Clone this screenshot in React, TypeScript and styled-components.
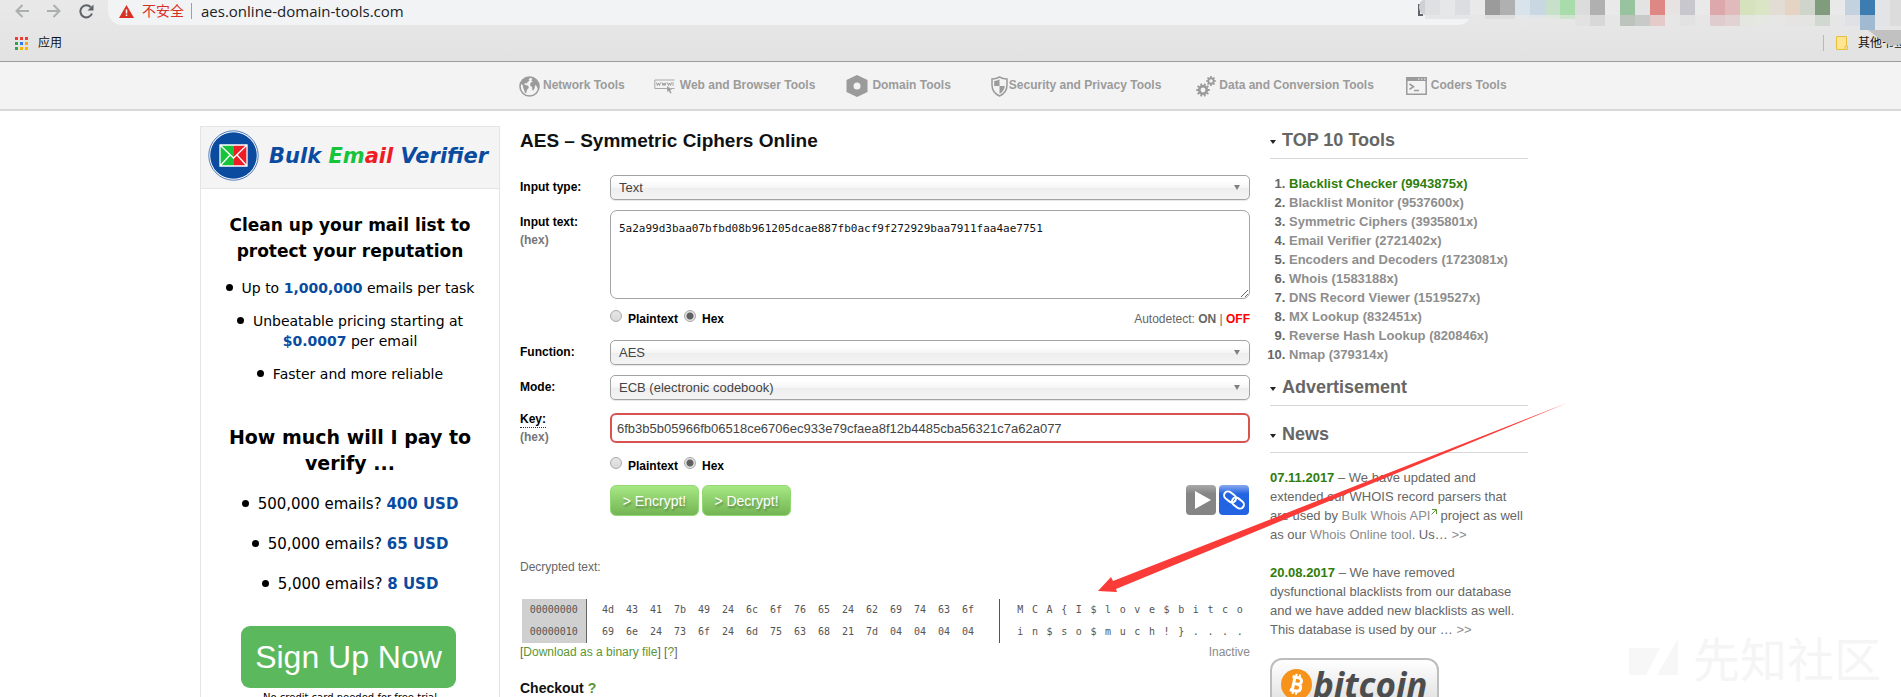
import React from "react";
import styled, { createGlobalStyle } from "styled-components";

const sans = '"Liberation Sans", Arial, sans-serif';
const mono = '"DejaVu Sans Mono", "Liberation Mono", monospace';
const ui = '"Open Sans", "Noto Sans CJK SC", sans-serif';

const GlobalStyle = createGlobalStyle`
  *, *::before, *::after { box-sizing: border-box; }
  body { margin: 0; background: #fff; color: #666; font: 12px/18px ${sans}; }
  h1, h2, h3, p, ul, ol, fieldset { margin: 0; padding: 0; border: 0; }
  a { text-decoration: none; color: inherit; }
  svg { display: block; flex: none; }
`;

const Window = styled.div`
  position: relative;
  height: 100vh;
  overflow: hidden;
`;

/* ---------- browser chrome ---------- */

const Chrome = styled.header`
  position: relative;
  height: 62px;
  background: linear-gradient(#e9e9e9, #e2e2e2);
  border-bottom: 1px solid #9c9c9c;
  font-family: ${ui};
`;

const AddressRow = styled.div`
  display: flex;
  align-items: center;
  height: 25px;
  padding: 0 429px 0 15px;
`;

const ToolButton = styled.button`
  display: flex;
  padding: 0;
  margin: 0 18px 3px 0;
  border: 0;
  background: none;
  color: ${(p: { $dim?: boolean }) => (p.$dim ? "#acaeb0" : "#5f6368")};
`;

const AddressBar = styled.div`
  flex: 1;
  display: flex;
  align-items: center;
  height: 25px;
  margin-left: -4px;
  padding: 0 0 3px 11px;
  background: #f1f3f5;
  border-radius: 0 0 14px 14px;
  color: #202124;
  font-size: 15px;
`;

const Insecure = styled.span`
  margin-left: 8px;
  padding-right: 7px;
  border-right: 1px solid #9aa0a6;
  color: #d93025;
  font-size: 14px;
  line-height: 16px;
`;

const Url = styled.span`
  margin-left: 9px;
`;

const BookmarkRow = styled.div`
  display: flex;
  align-items: center;
  justify-content: space-between;
  height: 36px;
  padding-left: 15px;
`;

const Bookmark = styled.a`
  display: flex;
  align-items: center;
  gap: 10px;
  color: #111;
  font-size: 12px;
  white-space: nowrap;
`;

const OtherBookmarks = styled(Bookmark)`
  height: 16px;
  width: 78px;
  padding-left: 12px;
  border-left: 1px solid #b9b9b9;
  overflow: hidden;
`;

const Mosaic = styled.svg`
  position: absolute;
  top: 0;
  right: 0;
`;

/* ---------- site navigation ---------- */

const Nav = styled.nav`
  display: flex;
  align-items: center;
  height: 49px;
  padding: 0 0 1px 519px;
  background: #f3f3f3;
  border-bottom: 2px solid #d8d8d8;
`;

const NavLink = styled.a<{ $lead: number; $gap: number }>`
  display: flex;
  align-items: center;
  gap: ${(p) => p.$gap}px;
  margin-left: ${(p) => p.$lead}px;
  color: #9b9b9b;
  font-weight: bold;
  white-space: nowrap;
  svg { margin-top: 2px; }
`;

/* ---------- page columns ---------- */

const Columns = styled.div`
  display: grid;
  grid-template-columns: 300px minmax(0, 1fr) 258px;
  gap: 20px;
  align-items: start;
  padding: 15px 373px 0 200px;
`;

const Banner = styled.aside`
  border: 1px solid #e4e4e4;
  color: #000;
  font-family: "DejaVu Sans", Verdana, sans-serif;
  text-align: center;
`;

const BannerHead = styled.div`
  display: flex;
  align-items: center;
  gap: 10px;
  height: 62px;
  padding: 0 0 4px 7px;
  background: #f4f4f4;
  border-bottom: 1px solid #e4e4e4;
`;

const Brand = styled.strong`
  color: #0a4ba0;
  font-size: 21px;
  font-style: italic;
  white-space: nowrap;
`;

const Tint = styled.span<{ $color: string }>`
  color: ${(p) => p.$color};
`;

const BannerTitle = styled.h2<{ $size: number; $top: number }>`
  margin-top: ${(p) => p.$top}px;
  font-size: ${(p) => p.$size}px;
  line-height: 26px;
`;

const Points = styled.ul<{ $gap: number; $top: number; $size: number }>`
  display: flex;
  flex-direction: column;
  gap: ${(p) => p.$gap}px;
  margin-top: ${(p) => p.$top}px;
  list-style: none;
  font-size: ${(p) => p.$size}px;
  line-height: 20px;
  strong { color: #0a4ba0; }
  li::before {
    content: "";
    display: inline-block;
    width: 7px;
    height: 7px;
    margin-right: 9px;
    border-radius: 50%;
    background: #000;
    vertical-align: 2px;
  }
`;

const SignUp = styled.button`
  height: 62px;
  width: 215px;
  margin: 32px 3px 0 0;
  padding: 0;
  border: 0;
  border-radius: 9px;
  background: #5cb85c;
  color: #fff;
  font: 32px ${sans};
`;

const SmallPrint = styled.p`
  font-size: 10px;
  line-height: 20px;
`;

/* ---------- cipher form ---------- */

const Title = styled.h1`
  margin: 3px 0 22px;
  color: #111;
  font-size: 19px;
  line-height: 24px;
`;

const Form = styled.form`
  display: flex;
  flex-direction: column;
  gap: 10px;
`;

const Row = styled.div`
  display: grid;
  grid-template-columns: 90px minmax(0, 1fr);
  align-items: start;
`;

const Label = styled.label<{ $high?: boolean }>`
  padding-top: ${(p) => (p.$high ? 0 : 3)}px;
  color: #000;
  font-weight: bold;
`;

const Hint = styled.span`
  display: block;
  color: #777;
`;

const Dotted = styled.span`
  padding-bottom: 1px;
  border-bottom: 1px dotted #333;
`;

const SelectBox = styled.div`
  position: relative;
  height: 25px;
  &::after {
    content: "";
    position: absolute;
    top: 10px;
    right: 10px;
    border: solid transparent;
    border-width: 5px 3px 0;
    border-top-color: #808080;
  }
`;

const Select = styled.select`
  appearance: none;
  width: 100%;
  height: 25px;
  padding: 0 8px;
  border: 1px solid #a3a3a3;
  border-radius: 5px;
  background: linear-gradient(#fff 20%, #f6f6f6 50%, #eee 52%, #f4f4f4);
  box-shadow: 0 1px 1px rgba(0, 0, 0, 0.1);
  color: #444;
  font: 13px ${sans};
`;

const TextArea = styled.textarea`
  display: block;
  width: 100%;
  height: 89px;
  padding: 10px 8px;
  border: 1px solid #a3a3a3;
  border-radius: 7px;
  color: #111;
  font: 11px/16px ${mono};
`;

const KeyInput = styled.input`
  display: block;
  width: 100%;
  height: 30px;
  margin: 3px 0;
  padding: 0 5px;
  border: 2px solid #d9534f;
  border-radius: 6px;
  color: #444;
  font: 13px ${sans};
`;

const FormatRow = styled.div`
  display: flex;
  justify-content: space-between;
  height: 21px;
  margin-left: 90px;
  line-height: 21px;
`;

const Choice = styled.label`
  color: #000;
  font-weight: bold;
  margin-right: 6px;
`;

const Radio = styled.input`
  appearance: none;
  width: 12px;
  height: 12px;
  margin: 0 6px 0 0;
  border: 1px solid #a9a9a9;
  border-radius: 50%;
  background: linear-gradient(#e6e6e6, #d9d9d9);
  vertical-align: 1px;
  &:checked {
    background: radial-gradient(circle, #606060 3px, #e2e2e2 4px);
  }
`;

const Actions = styled.div`
  display: flex;
  align-items: flex-start;
  gap: 3px;
  margin: -2px 0 0 90px;
  padding-right: 1px;
`;

const GreenButton = styled.button`
  width: 89px;
  height: 31px;
  padding: 0;
  border: 1px solid #93d873;
  border-radius: 6px;
  background: linear-gradient(#a6e884, #74b454);
  color: #fff;
  font: 14px ${sans};
  text-shadow: 1px 2px 2px rgba(0, 0, 0, 0.3);
`;

const IconButton = styled.button<{ $blue?: boolean }>`
  width: 30px;
  height: 30px;
  padding: 0;
  border: 0;
  border-radius: 4px;
  background: ${(p) =>
    p.$blue ? "linear-gradient(#87a9ee, #2364e2 30%, #2364e2)" : "linear-gradient(#a9a9a9, #858585 30%, #858585)"};
`;

const Push = styled.span`
  flex: 1;
`;

const ResultLabel = styled.p`
  margin: 42px 0 23px;
`;

const Dump = styled.table`
  width: calc(100% - 2px);
  margin-left: 2px;
  border-collapse: collapse;
  table-layout: fixed;
  color: #555;
  font: 10px/22px ${mono};
  th, td { height: 22px; padding: 0; text-align: center; font-weight: normal; }
`;

const Offset = styled.th`
  background: #d0d0d0;
  border-right: 1px solid #666;
`;

const Divider = styled.td`
  border-right: 1px solid #555;
`;

const ResultFoot = styled.div`
  display: flex;
  justify-content: space-between;
`;

const GreenLink = styled.a`
  color: #5b9632;
`;

const Muted = styled.a`
  color: #8c8c8c;
`;

const Checkout = styled.h2`
  margin-top: 17px;
  color: #111;
  font-size: 14px;
  line-height: 20px;
`;

/* ---------- right column ---------- */

const SideTitle = styled.h2<{ $top: number }>`
  display: flex;
  align-items: center;
  gap: 6px;
  height: 31px;
  margin-top: ${(p) => p.$top}px;
  padding-bottom: 6px;
  border-bottom: 1px solid #d8d8d8;
  font-size: 18px;
  line-height: 24px;
  &::before {
    content: "";
    margin-top: 3px;
    border: solid transparent;
    border-width: 4px 3px 0;
    border-top-color: #222;
  }
`;

const Ranking = styled.ol`
  margin-top: 15px;
  padding-left: 19px;
  font-size: 13px;
  line-height: 19px;
  font-weight: bold;
  color: #666;
  a { color: #8e8e8e; }
  li:first-child a { color: #2f7d0c; }
`;

const News = styled.p`
  margin-top: 15px;
  font-size: 13px;
  line-height: 19px;
  & + & { margin-top: 19px; }
  strong { color: #2f7d0c; }
  svg { display: inline; vertical-align: 5px; margin: 0 3px 0 1px; }
`;

const BitcoinButton = styled.button`
  display: flex;
  align-items: center;
  gap: 1px;
  width: 169px;
  height: 52px;
  margin-top: 19px;
  padding: 0 0 0 9px;
  border: 2px solid #bdbdbd;
  border-radius: 12px;
  background: linear-gradient(#fff, #ddd);
  color: #4d4d4d;
  font: italic bold 35px "Open Sans", sans-serif;
`;

/* ---------- overlays ---------- */

const Pointer = styled.svg`
  position: absolute;
  left: 1098px;
  top: 403px;
  pointer-events: none;
`;

const Watermark = styled.div`
  position: absolute;
  right: 20px;
  bottom: 17px;
  display: flex;
  align-items: center;
  gap: 15px;
  color: #f5f5f5;
  font: 47px/47px "Noto Sans CJK SC", sans-serif;
`;

/* ---------- icons ---------- */

const gear = (cx: number, cy: number, r: number, n: number) => {
  const pts: string[] = [];
  for (let i = 0; i < n; i++) {
    const at = (k: number, rad: number) => {
      const a = ((i + k) / n) * Math.PI * 2;
      return `${(cx + Math.cos(a) * rad).toFixed(2)} ${(cy + Math.sin(a) * rad).toFixed(2)}`;
    };
    pts.push(at(-0.22, r), at(0.22, r), at(0.3, r * 0.74), at(0.7, r * 0.74));
  }
  const h = r * 0.36;
  return `M${pts.join("L")}Z M${cx - h} ${cy}a${h} ${h} 0 1 0 ${2 * h} 0a${h} ${h} 0 1 0 ${-2 * h} 0Z`;
};

const GlobeIcon = () => (
  <svg width="21" height="21" viewBox="0 0 21 21">
    <circle cx="10.500" cy="10.500" r="9.500" fill="#f3f3f3" stroke="#9b9b9b" strokeWidth="1.600" />
    <path
      fill="#9b9b9b"
      d="M4 3.500C6 1.600 8.500 1 10 1l1 1.500-1.500 1 1 1.200-2 1.300-.5 1.500L6.500 7 5 8.200l1.500.8 2.700.8.6 2-1.800 2-.7 3-1.300.4-.8-3.200-1-2L4 9.500 1.800 7.500C2 6 3 4.500 4 3.500ZM12.500 1.300c3 .7 5.500 2.500 6.800 5.700.7 2 .6 4-.3 6l-1-2-.8-1.500-1.200-.2-.2 2.300-1.300 3-1.200-.5-.2-3-1.600-1L11 8l1.200-1.800 1.800-.7-1.800-1L13.500 3Z"
    />
  </svg>
);

const WwwIcon = () => (
  <svg width="21" height="15" viewBox="0 0 21 15">
    <path d="M20.500 1H.8v8.500H13M20.500 9.500H17M19 3v4" fill="none" stroke="#a8a8a8" />
    <path d="m2.500 3.500 1 3 1-2.500 1 2.500 1-3m1.500 0 1 3 1-2.500 1 2.500 1-3m1.500 0 1 3 1-2.500 1 2.500 1-3" fill="none" stroke="#9b9b9b" />
    <path d="m13 7 5 3.500-2 .4 1.500 2.800-1.300.7-1.400-2.700-1.500 1.300Z" fill="#9b9b9b" />
  </svg>
);

const HexIcon = () => (
  <svg width="22" height="22" viewBox="0 0 22 22">
    <path fillRule="evenodd" fill="#9b9b9b" d="M11 0l10.500 5v12L11 22 .5 17V5ZM11 7.500a3.500 3.500 0 1 0 0 7 3.500 3.500 0 1 0 0-7Z" />
  </svg>
);

const ShieldIcon = () => (
  <svg width="17" height="21" viewBox="0 0 17 21">
    <path d="M8.500 1c2.500 1.500 5 2 7.500 2v6c0 5-3 9-7.500 11C4 18 1 14 1 9V3c2.500 0 5-.5 7.500-2Z" fill="#f3f3f3" stroke="#9b9b9b" strokeWidth="1.500" />
    <path d="M8.500 3.300V10H3.200V5c2 0 3.600-.5 5.300-1.700ZM8.500 10h5.300c-.4 3.500-2.200 6.200-5.300 7.800Z" fill="#9b9b9b" />
  </svg>
);

const GearsIcon = () => (
  <svg width="20" height="21" viewBox="0 0 20 21">
    <path fillRule="evenodd" fill="#9b9b9b" d={gear(7, 14, 6.8, 10)} />
    <path fillRule="evenodd" fill="#9b9b9b" d={gear(15, 5, 5, 8)} />
  </svg>
);

const TerminalIcon = () => (
  <svg width="21" height="18" viewBox="0 0 21 18">
    <path d="M.8.800h19.400v16.400H.800Z" fill="none" stroke="#9b9b9b" strokeWidth="1.500" />
    <path d="M0 0h21v4H0Z" fill="#9b9b9b" />
    <path d="M12 2h1.500M15 2h1.500M18 2h1.500" stroke="#f3f3f3" />
    <path d="m3.500 7 4 2.700-4 2.700M8 13.500h5" fill="none" stroke="#9b9b9b" strokeWidth="1.600" />
  </svg>
);

const EnvelopeLogo = () => (
  <svg width="51" height="51" viewBox="0 0 51 51">
    <circle cx="25.500" cy="25.500" r="24.700" fill="#fff" stroke="#4d78b8" />
    <circle cx="25.500" cy="25.500" r="23.300" fill="#0a4ba0" />
    <path d="M12 15h14v21H12Z" fill="#16c43c" />
    <path d="M26 15h13v21H26Z" fill="#ee1c25" />
    <path d="M12 15h27v21H12ZM12 15l13.500 13L39 15M12 36l10-11M39 36 29 25" fill="none" stroke="#fff" strokeWidth="1.300" />
  </svg>
);

const ArrowIcon = ({ flip }: { flip?: boolean }) => (
  <svg width="14" height="14" viewBox="0 0 14 14">
    <path d={flip ? "M0 7h12.500M6.500 1l6 6-6 6" : "M14 7H1.500M7.500 1l-6 6 6 6"} fill="none" stroke="currentColor" strokeWidth="2" />
  </svg>
);

const ReloadIcon = () => (
  <svg width="15" height="15" viewBox="0 0 15 15">
    <path d="M13 9.500A6 6 0 1 1 11.800 3.300" fill="none" stroke="currentColor" strokeWidth="2" />
    <path d="M14.500.500V6.500H8.500Z" fill="currentColor" />
  </svg>
);

const WarningIcon = () => (
  <svg width="15" height="13" viewBox="0 0 15 13">
    <path d="M7.500 0 15 13H0Z" fill="#d93025" />
    <path d="M7.500 4.500v4M7.500 9.500v1.500" stroke="#fff" strokeWidth="1.500" />
  </svg>
);

const AppsIcon = () => (
  <svg width="13" height="13" viewBox="0 0 13 13">
    {["#ea3d35", "#ea3d35", "#ea3d35", "#32a350", "#2b7de9", "#f4a814", "#32a350", "#f8b400", "#f8b400"].map((c, i) => (
      <rect key={i} x={(i % 3) * 5} y={Math.floor(i / 3) * 5} width="3" height="3" fill={c} />
    ))}
  </svg>
);

const FolderIcon = () => (
  <svg width="12" height="14" viewBox="0 0 12 14">
    <path d="M.5.500h10V10h1v3.500H.500Z" fill="#ffe591" stroke="#e8bf3c" />
    <path d="M9 13.500V10h1.500" fill="none" stroke="#e8bf3c" />
  </svg>
);

const ExternalIcon = () => (
  <svg width="6" height="6" viewBox="0 0 6 6">
    <path d="M1 .5h4.500V5M5 1 .5 5.500" fill="none" stroke="#5b9632" />
  </svg>
);

const BitcoinCoin = () => (
  <svg width="31" height="31" viewBox="0 0 31 31">
    <circle cx="15.500" cy="15.500" r="15.500" fill="#f7931a" />
    <g transform="rotate(12 15.5 15.5)" fill="none" stroke="#fff" strokeWidth="3">
      <path d="M10 8.500h6.500a3.200 3.200 0 0 1 0 6.500H12.500M12.500 15h5a3.600 3.600 0 0 1 0 7H10M12.500 8.500V22" />
      <path d="M13.500 5v3.500M17 5v3.500M13.500 22v3.500M17 22v3.500" strokeWidth="2" />
    </g>
  </svg>
);

const PlayIcon = () => (
  <svg width="30" height="30" viewBox="0 0 30 30">
    <path d="M9 6v18l16-9Z" fill="#fff" />
  </svg>
);

const ChainIcon = () => (
  <svg width="30" height="30" viewBox="0 0 30 30">
    <g transform="rotate(38 15 15)" fill="none" stroke="#fff" strokeWidth="2">
      <rect x="3.500" y="11" width="13" height="8" rx="4" />
      <rect x="13.500" y="11" width="13" height="8" rx="4" />
    </g>
  </svg>
);

/* ---------- data ---------- */

const tiles: [number, string, string][] = [
  [25, "#dfe0e2", "#e6e6e6"], [40, "#e5e7e9", "#e6e6e6"], [55, "#dcdde0", "#e6e6e6"], [70, "#e9e9e9", "#e6e6e6"],
  [85, "#9b9b9b", "#dddddd"], [100, "#b0b0b0", "#dddddd"], [115, "#d9e3eb", "#e5e8ea"], [130, "#c9d7e3", "#e2e6e9"],
  [145, "#c7e0c9", "#dfe8df"], [160, "#a8dcaa", "#cfe3cf"], [175, "#dcdcdc", "#e2e2e2"], [190, "#b0b0b0", "#d8d8d8"],
  [205, "#e9e9e9", "#e6e6e6"], [220, "#97c49f", "#bcc4bd"], [235, "#e3e3e3", "#c8c9c9"], [250, "#de8783", "#e4cac8"],
  [265, "#e8e3e3", "#e6e6e6"], [280, "#c8c7cd", "#e2e2e2"], [295, "#e9e9e9", "#e6e6e6"], [310, "#dda8a9", "#dfccce"],
  [325, "#e1babb", "#e1d3d4"], [340, "#d5e2bd", "#e4e6e0"], [355, "#d9e5c5", "#e5e7e3"], [370, "#e3dcd5", "#e6e6e6"],
  [385, "#e5d4c4", "#e6e4e2"], [400, "#cfd5cb", "#e4e5e3"], [415, "#819b7d", "#d0d8cf"], [430, "#e9e9e9", "#e6e6e6"],
  [445, "#c4d2df", "#e0e1e7"], [460, "#3c7cb0", "#9fbad1"], [475, "#e3e4e7", "#e3e4e7"], [490, "#dcdcdc", "#dcdcdc"],
];
const shallow = (x: number) => x < 170;

const navItems = [
  { text: "Network Tools", icon: <GlobeIcon />, lead: 0, gap: 3 },
  { text: "Web and Browser Tools", icon: <WwwIcon />, lead: 29, gap: 5 },
  { text: "Domain Tools", icon: <HexIcon />, lead: 31, gap: 4 },
  { text: "Security and Privacy Tools", icon: <ShieldIcon />, lead: 40, gap: 1 },
  { text: "Data and Conversion Tools", icon: <GearsIcon />, lead: 35, gap: 3 },
  { text: "Coders Tools", icon: <TerminalIcon />, lead: 32, gap: 4 },
];

const topTools = [
  "Blacklist Checker (9943875x)", "Blacklist Monitor (9537600x)", "Symmetric Ciphers (3935801x)",
  "Email Verifier (2721402x)", "Encoders and Decoders (1723081x)", "Whois (1583188x)",
  "DNS Record Viewer (1519527x)", "MX Lookup (832451x)", "Reverse Hash Lookup (820846x)", "Nmap (379314x)",
];

const dump = [
  { offset: "00000000", hex: "4d 43 41 7b 49 24 6c 6f 76 65 24 62 69 74 63 6f", text: "MCA{I$love$bitco" },
  { offset: "00000010", hex: "69 6e 24 73 6f 24 6d 75 63 68 21 7d 04 04 04 04", text: "in$so$much!}...." },
];

const Format = ({ name }: { name: string }) => (
  <div>
    <Choice><Radio type="radio" name={name} value="plain" />Plaintext</Choice>
    <Choice><Radio type="radio" name={name} value="hex" defaultChecked />Hex</Choice>
  </div>
);

export default function App() {
  return (
    <Window>
      <GlobalStyle />
      <Chrome>
        <AddressRow>
          <ToolButton $dim aria-label="Back"><ArrowIcon /></ToolButton>
          <ToolButton $dim aria-label="Forward"><ArrowIcon flip /></ToolButton>
          <ToolButton aria-label="Reload"><ReloadIcon /></ToolButton>
          <AddressBar>
            <WarningIcon />
            <Insecure>不安全</Insecure>
            <Url>aes.online-domain-tools.com</Url>
          </AddressBar>
        </AddressRow>
        <BookmarkRow>
          <Bookmark href="#apps"><AppsIcon />应用</Bookmark>
          <OtherBookmarks href="#bookmarks"><FolderIcon />其他书签</OtherBookmarks>
        </BookmarkRow>
        <Mosaic width="501" height="46" viewBox="0 0 501 46">
          <path d="M19 4v11h4" fill="none" stroke="#5f6368" strokeWidth="2" />
          <path d="M25 0v15c-4-1-6-4-6-8s2-6 4-7Z" fill="#cfd0d4" />
          {tiles.map(([x, top, low]) => (
            <g key={x}>
              <rect x={x} y="0" width="15" height="15" fill={top} />
              <rect x={x} y="15" width="15" height={shallow(x) ? 4 : 11} fill={low} />
            </g>
          ))}
          <path d="M460 26h15v4h-15Z" fill="#9fbad1" />
          <path d="M468 30h33v14l-10 2-10-6Z" fill="#c1c1c1" />
        </Mosaic>
      </Chrome>

      <Nav>
        {navItems.map((n) => (
          <NavLink key={n.text} href="#tools" $lead={n.lead} $gap={n.gap}>{n.icon}{n.text}</NavLink>
        ))}
      </Nav>

      <Columns>
        <Banner>
          <BannerHead>
            <EnvelopeLogo />
            <Brand>
              Bulk <Tint $color="#16c43c">Em</Tint><Tint $color="#ee1c25">ail</Tint> Verifier
            </Brand>
          </BannerHead>
          <BannerTitle $size={17} $top={23}>Clean up your mail list to<br />protect your reputation</BannerTitle>
          <Points $gap={13} $top={14} $size={14}>
            <li>Up to <strong>1,000,000</strong> emails per task</li>
            <li>Unbeatable pricing starting at<br /><strong>$0.0007</strong> per email</li>
            <li>Faster and more reliable</li>
          </Points>
          <BannerTitle $size={19} $top={40}>How much will I pay to<br />verify ...</BannerTitle>
          <Points $gap={20} $top={18} $size={15}>
            <li>500,000 emails? <strong>400 USD</strong></li>
            <li>50,000 emails? <strong>65 USD</strong></li>
            <li>5,000 emails? <strong>8 USD</strong></li>
          </Points>
          <SignUp>Sign Up Now</SignUp>
          <SmallPrint>No credit card needed for free trial</SmallPrint>
        </Banner>

        <main>
          <Title>AES – Symmetric Ciphers Online</Title>
          <Form onSubmit={(e) => e.preventDefault()}>
            <Row>
              <Label htmlFor="type">Input type:</Label>
              <SelectBox><Select id="type"><option>Text</option></Select></SelectBox>
            </Row>
            <Row>
              <Label htmlFor="text">Input text:<Hint>(hex)</Hint></Label>
              <TextArea id="text" spellCheck={false} defaultValue="5a2a99d3baa07bfbd08b961205dcae887fb0acf9f272929baa7911faa4ae7751" />
            </Row>
            <FormatRow>
              <Format name="text-format" />
              <span>Autodetect: <strong>ON</strong> | <Tint as="strong" $color="#f00">OFF</Tint></span>
            </FormatRow>
            <Row>
              <Label htmlFor="fn">Function:</Label>
              <SelectBox><Select id="fn"><option>AES</option></Select></SelectBox>
            </Row>
            <Row>
              <Label htmlFor="mode">Mode:</Label>
              <SelectBox><Select id="mode"><option>ECB (electronic codebook)</option></Select></SelectBox>
            </Row>
            <Row>
              <Label htmlFor="key" $high><Dotted>Key:</Dotted><Hint>(hex)</Hint></Label>
              <KeyInput id="key" defaultValue="6fb3b5b05966fb06518ce6706ec933e79cfaea8f12b4485cba56321c7a62a077" />
            </Row>
            <FormatRow><Format name="key-format" /></FormatRow>
            <Actions>
              <GreenButton type="submit">&gt; Encrypt!</GreenButton>
              <GreenButton type="submit">&gt; Decrypt!</GreenButton>
              <Push />
              <IconButton type="button" aria-label="Play"><PlayIcon /></IconButton>
              <IconButton type="button" aria-label="Link" $blue><ChainIcon /></IconButton>
            </Actions>
          </Form>
          <ResultLabel>Decrypted text:</ResultLabel>
          <Dump>
            <colgroup>
              <col width="64" /><col width="10" /><col span={16} width="24" /><col width="19" />
              <col width="14" /><col span={16} /><col width="3" />
            </colgroup>
            <tbody>
              {dump.map((r) => (
                <tr key={r.offset}>
                  <Offset scope="row">{r.offset}</Offset>
                  <td />
                  {r.hex.split(" ").map((h, i) => <td key={i}>{h}</td>)}
                  <Divider />
                  <td />
                  {r.text.split("").map((c, i) => <td key={i}>{c}</td>)}
                  <td />
                </tr>
              ))}
            </tbody>
          </Dump>
          <ResultFoot>
            <span>[<GreenLink href="#download">Download as a binary file</GreenLink>] [<GreenLink href="#help">?</GreenLink>]</span>
            <Muted href="#inactive">Inactive</Muted>
          </ResultFoot>
          <Checkout>Checkout <GreenLink href="#checkout">?</GreenLink></Checkout>
        </main>

        <aside>
          <SideTitle $top={2}>TOP 10 Tools</SideTitle>
          <Ranking>
            {topTools.map((t) => <li key={t}><a href="#tool">{t}</a></li>)}
          </Ranking>
          <SideTitle $top={11}>Advertisement</SideTitle>
          <SideTitle $top={16}>News</SideTitle>
          <News>
            <strong>07.11.2017</strong> – We have updated and<br />extended our WHOIS record parsers that<br />
            are used by <Muted href="#api">Bulk Whois API<ExternalIcon /></Muted>project as well<br />
            as our <Muted href="#whois">Whois Online tool</Muted>. Us… <Muted href="#more">&gt;&gt;</Muted>
          </News>
          <News>
            <strong>20.08.2017</strong> – We have removed<br />dysfunctional blacklists from our database<br />
            and we have added new blacklists as well.<br />This database is used by our … <Muted href="#more">&gt;&gt;</Muted>
          </News>
          <BitcoinButton><BitcoinCoin />bitcoin</BitcoinButton>
        </aside>
      </Columns>

      <Pointer width="470" height="190" viewBox="0 0 470 190" aria-hidden="true">
        <path d="M0 188 13 174 15 178 469 0 18 186 19 189Z" fill="#fb3b38" />
      </Pointer>
      <Watermark aria-hidden="true">
        <svg width="49" height="36" viewBox="0 0 49 36">
          <path d="M0 9h31L17 36H0ZM49 0v36H28Z" fill="#f7f7f7" />
        </svg>
        先知社区
      </Watermark>
    </Window>
  );
}
